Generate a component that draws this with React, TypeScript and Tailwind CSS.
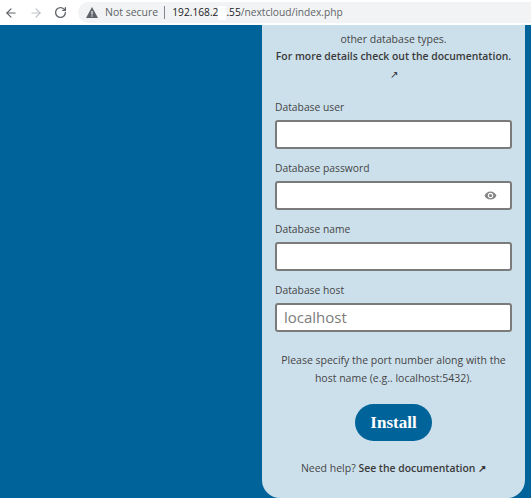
import { ArrowLeft, ArrowRight, RotateCw } from "lucide-react";

const EyeIcon = () => (
  <svg viewBox="0 0 24 24" className="h-[13px] w-[13px]" fill="#858585">
    <path d="M12 4.5C7 4.5 2.73 7.61 1 12c1.73 4.39 6 7.5 11 7.5s9.27-3.11 11-7.5c-1.73-4.39-6-7.5-11-7.5zM12 17c-2.76 0-5-2.24-5-5s2.24-5 5-5 5 2.24 5 5-2.24 5-5 5zm0-8c-1.66 0-3 1.34-3 3s1.34 3 3 3 3-1.34 3-3-1.34-3-3-3z" />
  </svg>
);

const Field = ({ label, placeholder, eye }: { label: string; placeholder?: string; eye?: boolean }) => (
  <div className="flex flex-col">
    <label className="h-[24px] pt-[4px] text-[10.3px] leading-[15px] text-[#454545]">{label}</label>
    <div className="flex h-[29px] items-center justify-between rounded-[3px] border-2 border-[#7b7b7b] bg-white pl-[7px] pr-[13px]">
      <span className="text-[15px] leading-none text-[#7c7c7c]">{placeholder}</span>
      {eye && <EyeIcon />}
    </div>
  </div>
);

const App = () => {
  return (
    <div className="flex h-[498px] w-[531px] flex-col overflow-hidden bg-[#00639a] font-['Open_Sans',sans-serif]">
      <div className="flex h-[25px] shrink-0 items-center bg-white pl-[4px]">
        <ArrowLeft className="h-[14px] w-[14px] text-[#5f6368]" strokeWidth={2} />
        <ArrowRight className="ml-[11px] h-[14px] w-[14px] text-[#bdc1c6]" strokeWidth={2} />
        <RotateCw className="ml-[11px] h-[13px] w-[13px] text-[#5f6368]" strokeWidth={2.4} />
        <div className="ml-[11px] flex h-[21px] flex-1 items-center rounded-l-full bg-[#f1f3f4] pl-[8px] text-[10.5px] text-[#5f6368]">
          <svg viewBox="0 0 12 11" className="h-[11px] w-[12px]">
            <path d="M6 0 L12 11 L0 11 Z" fill="#5f6368" />
            <rect x="5.4" y="4" width="1.2" height="3.6" fill="#f1f3f4" />
            <rect x="5.4" y="8.4" width="1.2" height="1.2" fill="#f1f3f4" />
          </svg>
          <span className="ml-[7px]">Not secure</span>
          <span className="ml-[6px] h-[13px] w-px bg-[#80868b]" />
          <span className="ml-[7px] text-[10.2px] text-[#202124]">192.168.2</span>
          <span className="h-[14px] w-[8px] bg-white" />
          <span className="text-[10.2px] text-[#202124]">.55</span>
          <span className="text-[10.2px]">/nextcloud/index.php</span>
        </div>
      </div>
      <div className="ml-[262px] flex w-[263px] flex-1 flex-col rounded-b-[18px] bg-[#cce0ec] px-[13px]">
        <p className="mt-[6px] text-center text-[10.5px] leading-[17px] text-[#454545]">other database types.</p>
        <p className="-mx-[4px] whitespace-nowrap text-center text-[10.4px] font-semibold leading-[17px] text-[#3a3a3a]">
          For more details check out the documentation.
        </p>
        <p className="text-center text-[10px] leading-[19px] text-[#222222]">↗</p>
        <div className="mt-[12px] flex flex-col gap-[8px]">
          <Field label="Database user" />
          <Field label="Database password" eye />
          <Field label="Database name" />
          <Field label="Database host" placeholder="localhost" />
        </div>
        <p className="mt-[19px] text-center text-[10.5px] leading-[18px] text-[#454545]">
          Please specify the port number along with the host name (e.g.. localhost:5432).
        </p>
        <button className="mx-auto mt-[17px] h-[37px] w-[77px] rounded-full bg-[#00639a] font-['Liberation_Serif',serif] text-[17px] font-bold text-white">
          Install
        </button>
        <p className="mt-[20px] text-center text-[10.5px] leading-[15px] text-[#454545]">
          Need help? <span className="text-[10.4px] font-semibold text-[#3a3a3a]">See the documentation ↗</span>
        </p>
      </div>
    </div>
  );
};

export default App;
